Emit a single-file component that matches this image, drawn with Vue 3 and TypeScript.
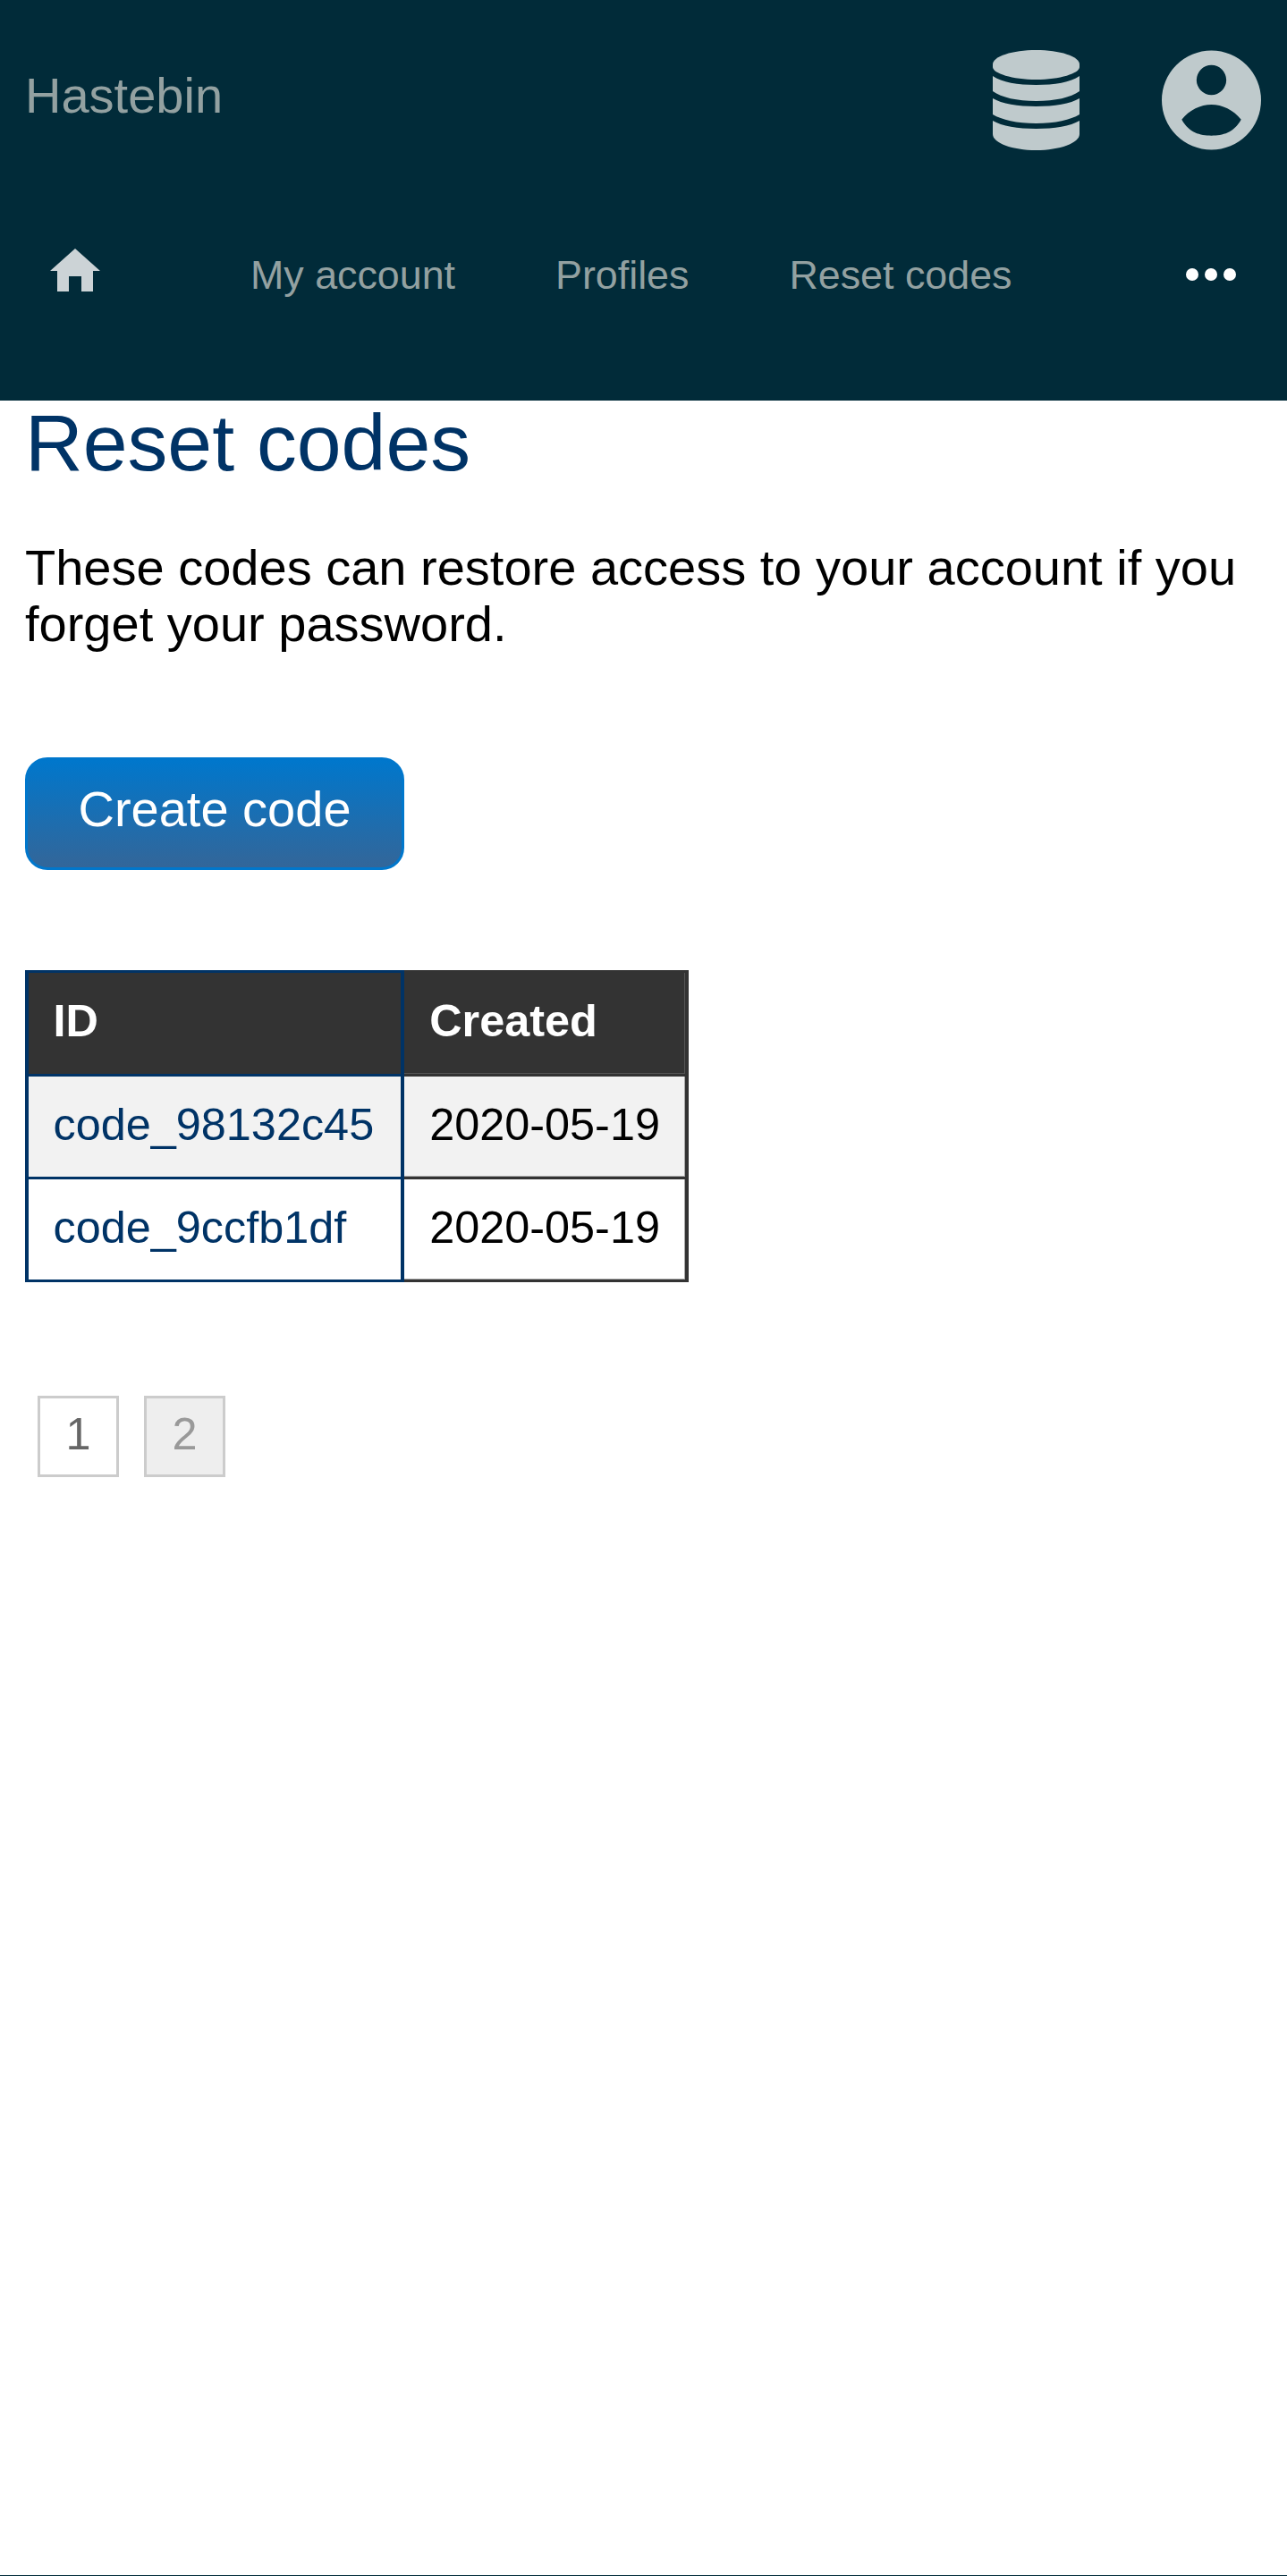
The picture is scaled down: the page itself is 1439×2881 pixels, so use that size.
<script setup lang="ts">
type CodeRow = { id: string; created: string }

const navLinks = ['My account', 'Profiles', 'Reset codes']

const codes: CodeRow[] = [
  { id: 'code_98132c45', created: '2020-05-19' },
  { id: 'code_9ccfb1df', created: '2020-05-19' },
]
</script>

<template>
  <div class="page">
    <header class="masthead">
      <div class="masthead__top">
        <a class="brand">Hastebin</a>
        <div class="masthead__icons">
          <svg class="icon-db" width="97" height="112" viewBox="0 0 97 112" aria-hidden="true">
            <path d="M0 16C0 7 22 0 48.5 0S97 7 97 16v3C97 26 75 33 48.5 33S0 26 0 19z" />
            <path d="M0 29c10 7 28 10 48.5 10S87 36 97 29v17c-10 7-27 11-48.5 11S10 53 0 46z" />
            <path d="M0 54c10 6 28 9 48.5 9S87 60 97 54v18c-10 6-27 10-48.5 10S10 78 0 72z" />
            <path d="M0 79c10 6 28 9 48.5 9S87 85 97 79v15c0 10-22 18-48.5 18S0 104 0 94z" />
          </svg>
          <svg class="icon-user" width="111" height="112" viewBox="0 0 112 112" aria-hidden="true">
            <path
              fill-rule="evenodd"
              d="M56 0a56 56 0 1 1 0 112A56 56 0 0 1 56 0zm0 16.500a16.800 16.800 0 1 0 0 33.600a16.800 16.800 0 0 0 0-33.600zM22.500 78C31 93 43 96 56 96S81 93 89.500 78C81 67 68 61 56 61S31 67 22.500 78z"
            />
          </svg>
        </div>
      </div>
      <nav class="nav">
        <a class="nav__home" aria-label="Home">
          <svg width="56" height="48" viewBox="0 0 56 48" aria-hidden="true">
            <path d="M28 0L56 25H48V48H35V31H21V48H8V25H0z" />
          </svg>
        </a>
        <a v-for="link in navLinks" :key="link" class="nav__link">{{ link }}</a>
        <a class="nav__more" aria-label="More">
          <span></span><span></span><span></span>
        </a>
      </nav>
    </header>

    <main class="content">
      <h1>Reset codes</h1>
      <p>These codes can restore access to your account if you forget your password.</p>
      <button type="button" class="btn">Create code</button>

      <table class="codes">
        <thead>
          <tr>
            <th class="col-id">ID</th>
            <th>Created</th>
          </tr>
        </thead>
        <tbody>
          <tr v-for="code in codes" :key="code.id">
            <td class="col-id"><a>{{ code.id }}</a></td>
            <td>{{ code.created }}</td>
          </tr>
        </tbody>
      </table>

      <div class="pager">
        <a class="pager__item">1</a>
        <a class="pager__item pager__item--current">2</a>
      </div>
    </main>

    <div class="baseline"></div>
  </div>
</template>

<style scoped>
.page {
  height: 2881px;
  display: flex;
  flex-direction: column;
  font-family: "Liberation Sans", Arial, sans-serif;
  font-size: 56px;
  color: #000;
  background: #fff;
}

.masthead {
  height: 448px;
  background: #012b39;
  color: #93a1a1;
  flex: none;
}

.masthead__top {
  display: flex;
  justify-content: space-between;
  align-items: flex-start;
  padding: 56px 29px 0 28px;
  height: 168px;
  box-sizing: border-box;
}

.brand {
  padding-top: 18px;
}

.masthead__icons {
  display: flex;
  gap: 92px;
}

.masthead__icons svg,
.nav__home svg {
  display: block;
  fill: #bfcacc;
}

.nav {
  display: flex;
  align-items: center;
  height: 280px;
  padding: 0 0 2px 56px;
  box-sizing: border-box;
  font-size: 44.8px;
}

.nav__home {
  margin-right: 168px;
  margin-top: -11px;
}

.nav__home svg {
  fill: #ccd3d6;
}

.nav__link {
  margin-right: 112px;
}

.nav__more {
  margin-left: auto;
  margin-right: 57px;
  display: flex;
  gap: 7px;
}

.nav__more span {
  width: 14px;
  height: 14px;
  border-radius: 50%;
  background: #fff;
}

.content {
  flex: 1;
  padding: 0 28px;
}

h1 {
  margin: 0;
  font-size: 89.6px;
  line-height: 95px;
  font-weight: 400;
  color: #003366;
}

p {
  margin: 60px 0 0;
  line-height: 63px;
}

.btn {
  display: block;
  margin-top: 118px;
  box-sizing: border-box;
  width: 424px;
  height: 126px;
  padding: 0 0 11px;
  border: 3px solid #0077cc;
  border-radius: 25px;
  background: linear-gradient(#0077cc, #336699);
  background-origin: padding-box;
  color: #fff;
  font: inherit;
}

.codes {
  margin-top: 112px;
  border-collapse: collapse;
  font-size: 50.4px;
}

.codes th,
.codes td {
  border-style: solid;
  border-color: #333;
  border-width: 3px 4px;
  padding: 24px 28.5px 29px;
  text-align: left;
}

.codes th {
  padding-bottom: 30px;
  background: #333;
  color: #fff;
}

.codes .col-id {
  border-color: #003366;
  padding-left: 27.5px;
  padding-right: 29.5px;
}

.codes th:last-child {
  box-shadow: inset -1px -1px 0 #555;
}

.codes td:last-child {
  box-shadow: inset -1px -1px 0 #aaa;
}

.codes tbody tr:nth-child(odd) td {
  background: #f2f2f2;
}

.codes a {
  color: #003366;
}

.pager {
  display: flex;
  gap: 28px;
  margin: 127px 0 0 14px;
  font-size: 50.4px;
}

.pager__item {
  box-sizing: border-box;
  width: 91px;
  height: 91px;
  padding-bottom: 7px;
  display: flex;
  align-items: center;
  justify-content: center;
  border: 3px solid #ccc;
  color: #666;
}

.pager__item--current {
  background: #eee;
  color: #999;
}

.baseline {
  height: 1px;
  flex: none;
  background: #012b39;
}
</style>

<style>
html,
body {
  margin: 0;
  background: #fff;
}
</style>
